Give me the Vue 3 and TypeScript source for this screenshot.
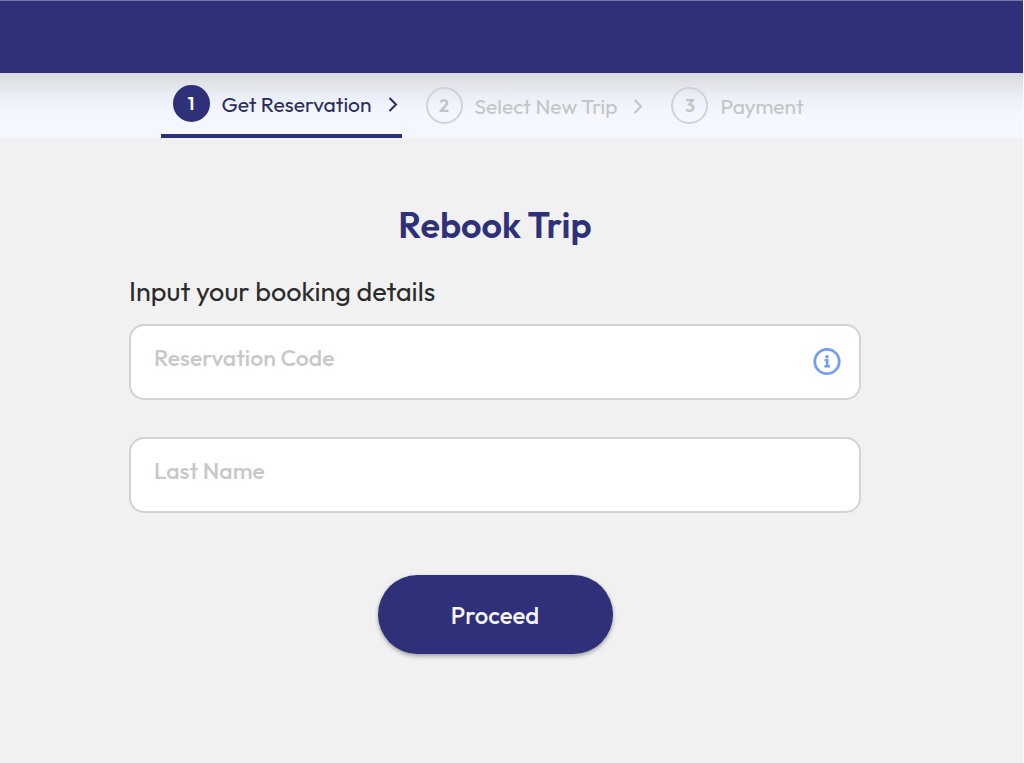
<script setup lang="ts">
import { ref } from 'vue'

interface Step {
  id: number
  label: string
}

const steps: Step[] = [
  { id: 1, label: 'Get Reservation' },
  { id: 2, label: 'Select New Trip' },
  { id: 3, label: 'Payment' },
]

const current = ref(1)
const reservationCode = ref('')
const lastName = ref('')
</script>

<template>
  <div class="page">
    <header class="topbar"></header>
    <nav class="stepper" aria-label="Progress">
      <ol class="steps">
        <li
          v-for="step in steps"
          :key="step.id"
          class="step"
          :class="{ active: step.id === current }"
          :aria-current="step.id === current ? 'step' : undefined"
        >
          <span class="number">{{ step.id }}</span>
          <span class="label">{{ step.label }}</span>
          <svg v-if="step.id < steps.length" class="chevron" viewBox="0 0 18 18" aria-hidden="true">
            <path d="M5.5 3 L12 9.5 L5.5 16" />
          </svg>
        </li>
      </ol>
    </nav>

    <main class="content">
      <h1 class="title">Rebook Trip</h1>
      <form class="form" @submit.prevent>
        <p class="intro">Input your booking details</p>
        <div class="field">
          <input v-model="reservationCode" type="text" placeholder="Reservation Code" aria-label="Reservation Code" />
          <button type="button" class="info" aria-label="About the reservation code">
            <svg viewBox="0 0 28 28" aria-hidden="true">
              <circle cx="14" cy="13.5" r="12.2" fill="none" stroke="currentColor" stroke-width="2.8" />
              <circle cx="14" cy="8.7" r="1.8" fill="currentColor" />
              <path d="M11.6 12.2 H14.2 V18.3 M11.4 18.3 H17" fill="none" stroke="currentColor" stroke-width="2.5" />
            </svg>
          </button>
        </div>
        <div class="field">
          <input v-model="lastName" type="text" placeholder="Last Name" aria-label="Last Name" />
        </div>
        <button type="submit" class="proceed">Proceed</button>
      </form>
    </main>
  </div>
</template>

<style>
body {
  margin: 0;
  background: #f1f1f1;
}
</style>

<style scoped>
.page {
  min-height: 100vh;
  box-sizing: border-box;
  border-right: 1px solid #fafafc;
  background: #f1f1f1;
  color: #2b2b2b;
  font-family: Outfit, Lato, sans-serif;
}

.topbar {
  height: 72px;
  border-top: 1px solid #7476a8;
  background: #2e3079;
}

.stepper {
  height: 65px;
  padding-right: 35px;
  background: linear-gradient(#d9dae0 0, #e3e4e9 12px, #ebeff8 24px, #f4f7fe 42px, #f6f7fe 100%);
}

.steps {
  display: flex;
  justify-content: center;
  gap: 12px;
  height: 100%;
  margin: 0;
  padding: 0;
  list-style: none;
}

.step {
  display: flex;
  align-items: center;
  box-sizing: border-box;
  min-width: 168px;
  padding-left: 12px;
  color: #c4c4c4;
  font-size: 21px;
}

.step.active {
  border-bottom: 4px solid #2e3079;
  color: #2b2c5c;
}

.number {
  display: flex;
  align-items: center;
  justify-content: center;
  box-sizing: border-box;
  width: 37px;
  height: 37px;
  margin-right: 12px;
  border: 2px solid #d2d2d5;
  border-radius: 50%;
  font-size: 18px;
  font-weight: 600;
}

.active .number {
  border-color: #2e3079;
  background: #2e3079;
  color: #fff;
}

.chevron {
  width: 18px;
  height: 18px;
  margin-left: 12px;
  fill: none;
  stroke: currentColor;
  stroke-width: 2;
}

.content {
  padding: 63px 162px 64px 129px;
}

.title {
  margin: 0;
  color: #2e3079;
  font-size: 36px;
  font-weight: 600;
  line-height: 48px;
  text-align: center;
}

.form {
  display: flex;
  flex-direction: column;
}

.intro {
  margin: 24px 0 15px;
  font-size: 27px;
  line-height: 36px;
}

.field {
  display: flex;
  align-items: center;
  box-sizing: border-box;
  height: 76px;
  margin-bottom: 37px;
  padding-right: 18px;
  border: 2px solid #d3d3d3;
  border-radius: 15px;
  background: #fff;
}

.field input {
  flex: 1;
  min-width: 0;
  padding: 0 24px 10px 23px;
  border: 0;
  outline: 0;
  background: transparent;
  color: #2b2b2b;
  font: inherit;
  font-size: 23px;
  font-weight: 500;
}

.field input::placeholder {
  color: #c8c8c8;
  opacity: 1;
}

.info {
  width: 28px;
  height: 28px;
  padding: 0;
  border: 0;
  background: none;
  color: #739df3;
}

.info svg {
  display: block;
}

.proceed {
  align-self: center;
  width: 235px;
  height: 79px;
  margin-top: 25px;
  border: 0;
  border-radius: 40px;
  background: #2e3079;
  box-shadow: 0 2px 4px rgba(0, 0, 0, 0.35);
  color: #f4f4fa;
  font: inherit;
  font-size: 24px;
  font-weight: 500;
}
</style>
